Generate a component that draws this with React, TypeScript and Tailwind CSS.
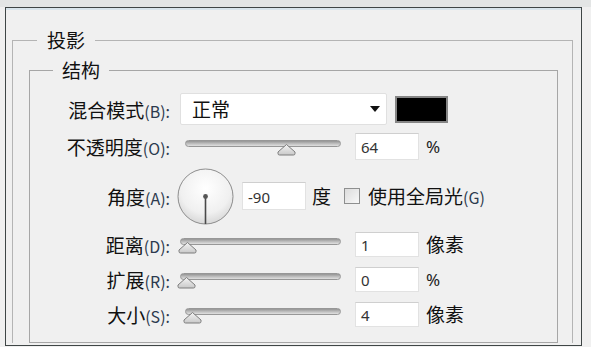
import * as React from "react";

const cjk = "font-['Microsoft_YaHei','Noto_Sans_CJK_SC',sans-serif]";

function Label({ zh, key_ }: { zh: string; key_: string }) {
  return (
    <div className="w-[140px] shrink-0 whitespace-nowrap text-right text-[19px] leading-none text-[#111]">
      {zh}
      <span className="text-[16px] text-[#2c3a4e]">({key_}):</span>
    </div>
  );
}

function Field({ value, className = "" }: { value: string; className?: string }) {
  return (
    <div
      className={`flex h-[25px] w-[64px] shrink-0 items-center border border-[#e2e2e2] border-t-[#cfcfcf] bg-white pl-[5px] pt-[2px] font-['Noto_Sans',sans-serif] text-[15px] text-[#333] ${className}`}
    >
      {value}
    </div>
  );
}

function Thumb() {
  return (
    <svg width="19" height="13" viewBox="0 0 19 13">
      <defs>
        <linearGradient id="tg" x1="0" y1="0" x2="0" y2="1">
          <stop offset="0" stopColor="#f4f4f4" />
          <stop offset="1" stopColor="#c9c9c9" />
        </linearGradient>
      </defs>
      <path
        d="M2.5 12 Q1 12 1 10.5 L1 9 L9.5 1.5 L18 9 L18 10.5 Q18 12 16.5 12 Z"
        fill="url(#tg)"
        stroke="#7d7d7d"
        strokeWidth="1"
      />
    </svg>
  );
}

// trackLeft / thumbLeft are px offsets inside the slider box (box starts at x=178)
function Slider({ trackLeft, thumbLeft }: { trackLeft: number; thumbLeft: number }) {
  return (
    <div className="relative ml-[8px] h-full w-[165px] shrink-0">
      <div
        className="absolute top-[calc(50%-7px)] h-[7px] rounded-full border border-[#979797] bg-gradient-to-b from-[#959595] via-[#bcbcbc] to-[#e0e0e0]"
        style={{ left: trackLeft, right: 2 }}
      />
      <div className="absolute top-[calc(50%-4px)]" style={{ left: thumbLeft }}>
        <Thumb />
      </div>
    </div>
  );
}

function Dial() {
  return (
    <svg width="57" height="57" viewBox="0 0 57 57" className="ml-[7px] shrink-0">
      <defs>
        <radialGradient id="dg" cx="0.5" cy="0.35" r="0.65">
          <stop offset="0" stopColor="#ffffff" />
          <stop offset="0.7" stopColor="#f0f0f0" />
          <stop offset="1" stopColor="#d8d8d8" />
        </radialGradient>
      </defs>
      <circle cx="28.5" cy="28.5" r="27.5" fill="url(#dg)" stroke="#8d8d8d" strokeWidth="1" />
      <line x1="28.5" y1="28.5" x2="28.5" y2="56" stroke="#4a4a4a" strokeWidth="1.6" />
      <circle cx="28.5" cy="28.5" r="2.4" fill="#555" />
    </svg>
  );
}

export default function App() {
  return (
    <div className={`flex h-[347px] w-[591px] flex-col overflow-hidden bg-[#f0f0f0] ${cjk}`}>
      <div className="h-[7px] shrink-0 bg-[#e3e5e5]" />
      <div className="ml-[5px] flex h-[339px] w-[577px] shrink-0 flex-col overflow-hidden border border-[#3f4646] bg-[#f0f0f0]">
        <div className="h-[2px] shrink-0 bg-[#d9e5ec]" />

        <fieldset className="ml-[6px] mr-[8px] mt-[20px] border border-b-0 border-[#b4b4b4]">
          <legend className="ml-[24px] px-[10px] text-[19px] leading-[20px] text-[#111]">投影</legend>

          <fieldset className="ml-[16px] mr-[14px] mt-[10px] border border-[#a6a6a6] pb-[15px]">
            <legend className="ml-[23px] px-[9px] text-[19px] leading-[20px] text-[#111]">结构</legend>

            <div className="flex flex-col">
              {/* blend mode */}
              <div className="mt-[13px] flex h-[32px] items-center">
                <Label zh="混合模式" key_="B" />
                <div className="ml-[10px] flex h-full w-[207px] items-center justify-between rounded-[2px] border border-[#e0e0e0] bg-white pl-[11px] pr-[6px]">
                  <span className="text-[19px] text-[#111]">正常</span>
                  <svg width="10" height="6" viewBox="0 0 10 6">
                    <path d="M0 0 L10 0 L5 6 Z" fill="#111" />
                  </svg>
                </div>
                <div className="ml-[8px] h-[27px] w-[53px] border-2 border-[#858585] bg-black" />
              </div>

              {/* opacity */}
              <div className="mt-[8px] flex h-[27px] items-center">
                <Label zh="不透明度" key_="O" />
                <Slider trackLeft={7} thumbLeft={99} />
                <Field value="64" className="ml-[12px] h-[27px]" />
                <span className="ml-[7px] font-['Noto_Sans',sans-serif] text-[17px] text-[#222]">%</span>
              </div>

              {/* angle */}
              <div className="mt-[8px] flex h-[56px] items-center">
                <Label zh="角度" key_="A" />
                <Dial />
                <Field value="-90" className="ml-[8px] h-[28px]" />
                <span className="ml-[6px] text-[19px] text-[#111]">度</span>
                <div className="ml-[13px] h-[16px] w-[16px] border border-[#8e8f8f] bg-gradient-to-br from-[#dcdcdc] to-[#f8f8f8]" />
                <span className="ml-[8px] whitespace-nowrap text-[19px] text-[#111]">
                  使用全局光<span className="text-[16px] text-[#2c3a4e]">(G)</span>
                </span>
              </div>

              {/* distance */}
              <div className="mt-[8px] flex h-[25px] items-center">
                <Label zh="距离" key_="D" />
                <Slider trackLeft={2} thumbLeft={0} />
                <Field value="1" className="ml-[12px]" />
                <span className="ml-[7px] text-[19px] text-[#111]">像素</span>
              </div>

              {/* spread */}
              <div className="mt-[10px] flex h-[25px] items-center">
                <Label zh="扩展" key_="R" />
                <Slider trackLeft={2} thumbLeft={-1} />
                <Field value="0" className="ml-[12px]" />
                <span className="ml-[7px] font-['Noto_Sans',sans-serif] text-[17px] text-[#222]">%</span>
              </div>

              {/* size */}
              <div className="mt-[10px] flex h-[25px] items-center">
                <Label zh="大小" key_="S" />
                <Slider trackLeft={7} thumbLeft={5} />
                <Field value="4" className="ml-[12px]" />
                <span className="ml-[7px] text-[19px] text-[#111]">像素</span>
              </div>
            </div>
          </fieldset>
        </fieldset>
      </div>
    </div>
  );
}
